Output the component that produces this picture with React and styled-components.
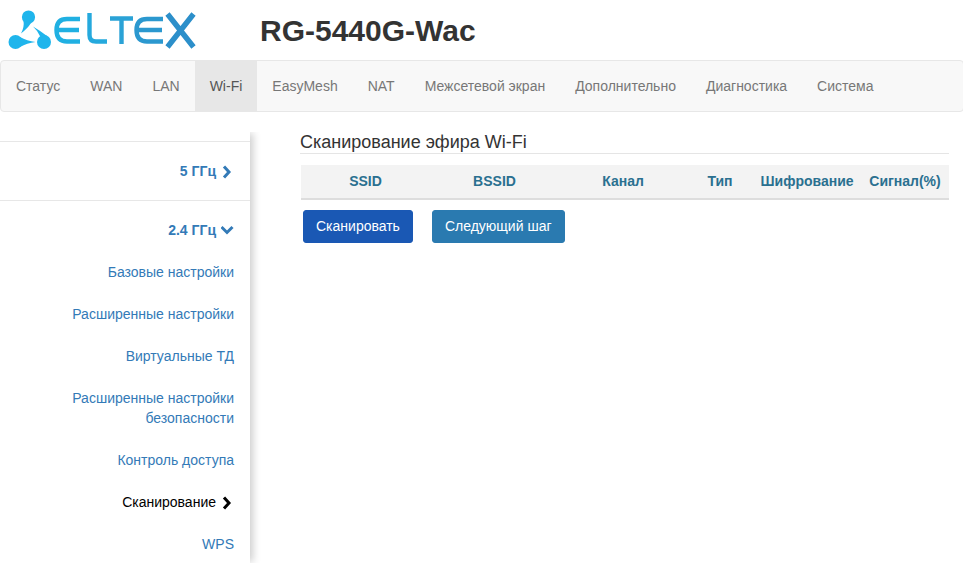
import React from "react";
import styled, { createGlobalStyle } from "styled-components";

const GlobalStyle = createGlobalStyle`
  html, body {
    margin: 0;
    background: #fff;
    font-family: "Liberation Sans", Arial, sans-serif;
    font-size: 14px;
    color: #333;
    overflow: hidden;
  }
  * { box-sizing: border-box; }
`;

const Page = styled.div`
  width: 963px;
  height: 573px;
  overflow: hidden;
`;

const Header = styled.header`
  height: 60px;
  display: flex;
  align-items: center;
  padding-left: 8px;
`;

const Title = styled.h1`
  margin: 0 0 0 62px;
  font-size: 30px;
  font-weight: 700;
  line-height: 33px;
`;

const Navbar = styled.nav`
  height: 52px;
  width: 964px;
  display: flex;
  background: #f8f8f8;
  border: 1px solid #e7e7e7;
  border-radius: 4px;
`;

const NavItem = styled.a`
  padding: 15px;
  line-height: 20px;
  height: 50px;
  color: ${({ $active }) => ($active ? "#555" : "#777")};
  background: ${({ $active }) => ($active ? "#e7e7e7" : "transparent")};
`;

const Body = styled.div`
  display: flex;
  align-items: flex-start;
  margin-top: 18px;
`;

const Sidebar = styled.aside`
  width: 250px;
  height: 435px;
  padding-top: 11px;
  flex-shrink: 0;
  background: #fff;
  box-shadow: 6px 0 8px -3px rgba(0, 0, 0, 0.2);
  clip-path: inset(2px -12px 2px 0);
`;

const SideGroup = styled.div`
  border-top: 1px solid #e7e7e7;
  height: ${({ $h }) => $h}px;
  display: flex;
  flex-direction: column;
`;

const SideLink = styled.a`
  display: flex;
  align-items: center;
  justify-content: flex-end;
  padding: 11px 16px 11px 0;
  line-height: 20px;
  text-align: right;
  color: ${({ $current }) => ($current ? "#000" : "#337ab7")};
  font-weight: ${({ $bold }) => ($bold ? 700 : 400)};
  gap: 5px;
`;

const GroupLink = styled(SideLink)`
  padding: 19px 16px 19px 0;
  color: #337ab7;
`;

const IconSlot = styled.svg`
  width: 13px;
  height: 14px;
  margin-top: 2px;
  fill: none;
  stroke: currentColor;
  stroke-width: 3;
`;

const SideList = styled.div`
  display: flex;
  flex-direction: column;
  margin-top: -8px;
`;

const Main = styled.main`
  margin-left: 50px;
  width: 649px;
`;

const SectionTitle = styled.h4`
  margin: 0;
  height: 24px;
  padding-top: 2px;
  font-size: 18px;
  font-weight: 400;
  line-height: 20px;
  border-bottom: 1px solid #e5e5e5;
`;

const Table = styled.table`
  width: 648px;
  margin: 11px 0 0 1px;
  border-collapse: collapse;
  table-layout: fixed;
`;

const Th = styled.th`
  height: 34px;
  padding: 0 0 2px;
  background: #f3f3f3;
  border-bottom: 2px solid #ddd;
  color: #2a7090;
  font-size: 14px;
  font-weight: 700;
  text-align: center;
`;

const Actions = styled.div`
  display: flex;
  gap: 19px;
  margin: 10px 0 0 3px;
`;

const Button = styled.button`
  height: 33px;
  padding: 0 12px 2px;
  border: 1px solid ${({ $primary }) => ($primary ? "#1a58b4" : "#2a7ab0")};
  border-radius: 3px;
  background: ${({ $primary }) => ($primary ? "#1a58b4" : "#2a7ab0")};
  color: #fff;
  font: 14px "Liberation Sans", Arial, sans-serif;
`;

const ChevronRight = () => (
  <IconSlot viewBox="0 0 13 14"><path d="M3 1.5 L8 7 L3 12.5" /></IconSlot>
);

const ChevronDown = () => (
  <IconSlot viewBox="0 0 13 14"><path d="M0.5 3 L6 8.5 L11.5 3" /></IconSlot>
);

const Logo = () => (
  <svg width="190" height="44" viewBox="0 0 190 44" fill="none">
    <g fill="#1fb5ec">
      <circle cx="20.5" cy="9" r="6.6" />
      <path d="M15.5 13 Q16.5 19 13 25.5 Q20 20 23 15 Z" />
      <circle cx="7.5" cy="34" r="7" />
      <path d="M12 29 Q19 33 27.5 34 Q19 35 12 39 Z" />
      <circle cx="36" cy="34" r="7" />
      <path d="M32.5 29 Q30 23 25 18.5 Q31 22 39 28 Z" />
    </g>
    <g strokeWidth="4.4" fill="none">
      <path d="M72 11 H59 Q48.5 11 48.5 22 Q48.5 33.5 59 33.5 H72 M50 22 H71" stroke="#20b0e2" />
      <path d="M81.5 5 V27 Q81.5 33.5 88 33.5 H99" stroke="#25a9dd" />
      <path d="M102 10.5 H125 M113.5 10.5 V36" stroke="#2aa2d6" />
      <path d="M155 11 H139 Q128.5 11 128.5 22 Q128.5 33.5 139 33.5 H155 M130 22 H154" stroke="#2b98cf" />
      <path d="M159.5 6 L185.5 39 M185.5 6 L159.5 39" stroke="#2c8fca" strokeWidth="5.4" />
    </g>
  </svg>
);

const tabs = ["Статус", "WAN", "LAN", "Wi-Fi", "EasyMesh", "NAT", "Межсетевой экран", "Дополнительно", "Диагностика", "Система"];
const columns = [
  ["SSID", 129],
  ["BSSID", 129],
  ["Канал", 128],
  ["Тип", 66],
  ["Шифрование", 108],
  ["Сигнал(%)", 88],
];

export default function App() {
  return (
    <Page>
      <GlobalStyle />
      <Header>
        <Logo />
        <Title>RG-5440G-Wac</Title>
      </Header>
      <Navbar>
        {tabs.map((t) => (
          <NavItem key={t} $active={t === "Wi-Fi"}>{t}</NavItem>
        ))}
      </Navbar>
      <Body>
        <Sidebar>
          <SideGroup $h={59}>
            <GroupLink $bold>
              5 ГГц
              <ChevronRight />
            </GroupLink>
          </SideGroup>
          <SideGroup $h={364}>
            <GroupLink $bold>
              2.4 ГГц
              <ChevronDown />
            </GroupLink>
            <SideList>
              <SideLink>Базовые настройки</SideLink>
              <SideLink>Расширенные настройки</SideLink>
              <SideLink>Виртуальные ТД</SideLink>
              <SideLink>Расширенные настройки<br />безопасности</SideLink>
              <SideLink>Контроль доступа</SideLink>
              <SideLink $current>
                Сканирование
                <ChevronRight />
              </SideLink>
              <SideLink>WPS</SideLink>
            </SideList>
          </SideGroup>
        </Sidebar>
        <Main>
          <SectionTitle>Сканирование эфира Wi-Fi</SectionTitle>
          <Table>
            <colgroup>
              {columns.map(([name, w]) => <col key={name} width={w} />)}
            </colgroup>
            <thead>
              <tr>
                {columns.map(([name]) => <Th key={name}>{name}</Th>)}
              </tr>
            </thead>
          </Table>
          <Actions>
            <Button $primary>Сканировать</Button>
            <Button>Следующий шаг</Button>
          </Actions>
        </Main>
      </Body>
    </Page>
  );
}
